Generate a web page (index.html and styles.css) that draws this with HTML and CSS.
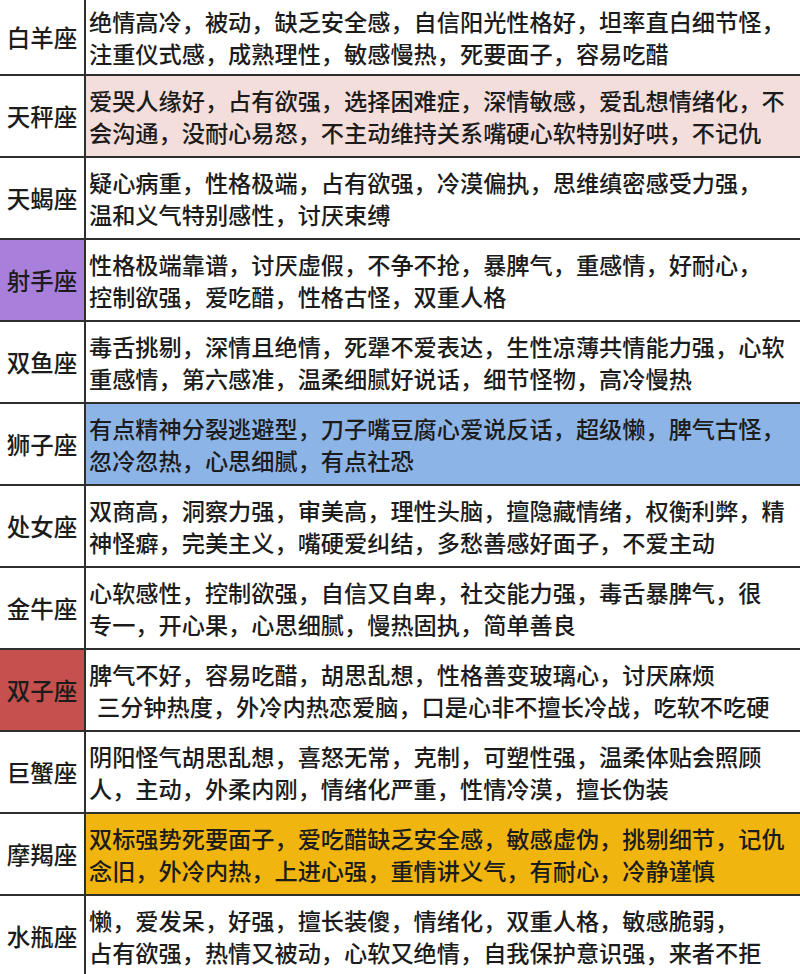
FILE: index.html
```html
<!DOCTYPE html>
<html lang="zh-CN">
<head>
<meta charset="utf-8">
<title>星座性格</title>
<link rel="stylesheet" href="styles.css">
</head>
<body>
<div class="table">
  <div class="row first">
    <div class="name">白羊座</div>
    <div class="desc"><div class="text">绝情高冷，被动，缺乏安全感，自信阳光性格好，坦率直白细节怪，<br>注重仪式感，成熟理性，敏感慢热，死要面子，容易吃醋</div></div>
  </div>
  <div class="row">
    <div class="name">天秤座</div>
    <div class="desc pink"><div class="text">爱哭人缘好，占有欲强，选择困难症，深情敏感，爱乱想情绪化，不<br>会沟通，没耐心易怒，不主动维持关系嘴硬心软特别好哄，不记仇</div></div>
  </div>
  <div class="row">
    <div class="name">天蝎座</div>
    <div class="desc"><div class="text">疑心病重，性格极端，占有欲强，冷漠偏执，思维缜密感受力强，<br>温和义气特别感性，讨厌束缚</div></div>
  </div>
  <div class="row">
    <div class="name purple">射手座</div>
    <div class="desc"><div class="text">性格极端靠谱，讨厌虚假，不争不抢，暴脾气，重感情，好耐心，<br>控制欲强，爱吃醋，性格古怪，双重人格</div></div>
  </div>
  <div class="row">
    <div class="name">双鱼座</div>
    <div class="desc"><div class="text">毒舌挑剔，深情且绝情，死犟不爱表达，生性凉薄共情能力强，心软<br>重感情，第六感准，温柔细腻好说话，细节怪物，高冷慢热</div></div>
  </div>
  <div class="row">
    <div class="name">狮子座</div>
    <div class="desc blue"><div class="text">有点精神分裂逃避型，刀子嘴豆腐心爱说反话，超级懒，脾气古怪，<br>忽冷忽热，心思细腻，有点社恐</div></div>
  </div>
  <div class="row">
    <div class="name">处女座</div>
    <div class="desc"><div class="text">双商高，洞察力强，审美高，理性头脑，擅隐藏情绪，权衡利弊，精<br>神怪癖，完美主义，嘴硬爱纠结，多愁善感好面子，不爱主动</div></div>
  </div>
  <div class="row">
    <div class="name">金牛座</div>
    <div class="desc"><div class="text">心软感性，控制欲强，自信又自卑，社交能力强，毒舌暴脾气，很<br>专一，开心果，心思细腻，慢热固执，简单善良</div></div>
  </div>
  <div class="row">
    <div class="name red">双子座</div>
    <div class="desc"><div class="text">脾气不好，容易吃醋，胡思乱想，性格善变玻璃心，讨厌麻烦<br><span class="indent">三分钟热度，外冷内热恋爱脑，口是心非不擅长冷战，吃软不吃硬</span></div></div>
  </div>
  <div class="row">
    <div class="name">巨蟹座</div>
    <div class="desc"><div class="text">阴阳怪气胡思乱想，喜怒无常，克制，可塑性强，温柔体贴会照顾<br>人，主动，外柔内刚，情绪化严重，性情冷漠，擅长伪装</div></div>
  </div>
  <div class="row">
    <div class="name">摩羯座</div>
    <div class="desc gold"><div class="text">双标强势死要面子，爱吃醋缺乏安全感，敏感虚伪，挑剔细节，记仇<br>念旧，外冷内热，上进心强，重情讲义气，有耐心，冷静谨慎</div></div>
  </div>
  <div class="row last">
    <div class="name">水瓶座</div>
    <div class="desc"><div class="text">懒，爱发呆，好强，擅长装傻，情绪化，双重人格，敏感脆弱，<br>占有欲强，热情又被动，心软又绝情，自我保护意识强，来者不拒</div></div>
  </div>
</div>
</body>
</html>
```

FILE: styles.css
```css
html, body {
  margin: 0;
  padding: 0;
  background: #ffffff;
}

body {
  width: 800px;
  height: 974px;
  overflow: hidden;
  font-family: "Noto Sans CJK SC", "Noto Sans", sans-serif;
  color: #1c1c1c;
}

.table {
  display: flex;
  flex-direction: column;
}

.row {
  display: grid;
  grid-template-columns: 86px 1fr;
  height: 82px;
  border-top: 2px solid #2e2e2e;
  box-sizing: border-box;
}

.row.first {
  height: 74px;
  border-top: none;
}

.name {
  display: flex;
  align-items: center;
  justify-content: center;
  font-size: 23.5px;
  font-weight: 500;
  border-right: 2px solid #2e2e2e;
}

.desc {
  display: flex;
  align-items: center;
  padding-left: 3px;
  overflow: hidden;
}

.text {
  font-size: 23.2px;
  line-height: 32px;
  font-weight: 500;
  white-space: nowrap;
}

.indent {
  padding-left: 8px;
}

.pink {
  background: #f3dedb;
}

.blue {
  background: #8cb4e6;
}

.gold {
  background: #f0b50f;
}

.purple {
  background: #a97fdc;
}

.red {
  background: #c5504d;
}
```
